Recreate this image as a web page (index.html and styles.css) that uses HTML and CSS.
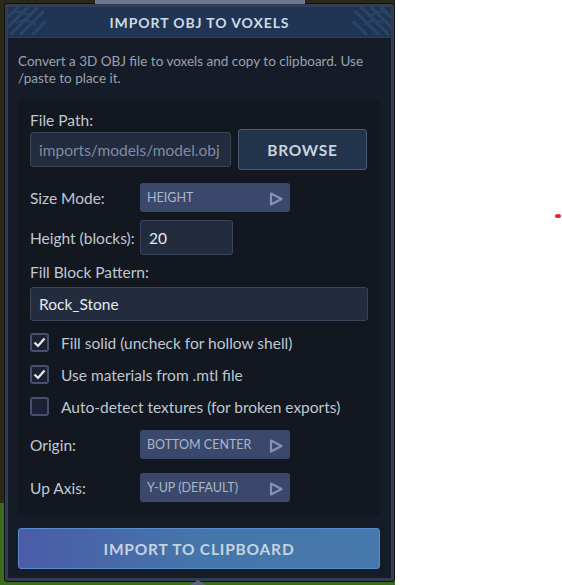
FILE: index.html
```html
<!DOCTYPE html>
<html>
<head>
<meta charset="utf-8">
<link rel="stylesheet" href="styles.css">
</head>
<body>
<div class="stage">
  <div class="top-tab"></div>
  <div class="window">
    <div class="header">
      <svg class="knot knot-left" width="40" height="30" viewBox="0 0 40 30">
        <path d="M0 10 L10 0 M0 20 L20 0 M2 28 L30 0 M12 28 L36 4 M24 28 L38 14" stroke="#294668" stroke-width="3" fill="none"/>
        <path d="M4 6 Q14 2 22 10 M8 16 Q18 10 28 18" stroke="#294668" stroke-width="2" fill="none"/>
      </svg>
      <h1 class="title">IMPORT OBJ TO VOXELS</h1>
      <svg class="knot knot-right" width="40" height="30" viewBox="0 0 40 30">
        <path d="M40 10 L30 0 M40 20 L20 0 M38 28 L10 0 M28 28 L4 4 M16 28 L2 14" stroke="#294668" stroke-width="3" fill="none"/>
        <path d="M36 6 Q26 2 18 10 M32 16 Q22 10 12 18" stroke="#294668" stroke-width="2" fill="none"/>
      </svg>
    </div>
    <div class="content">
      <p class="desc">Convert a 3D OBJ file to voxels and copy to clipboard. Use /paste to place it.</p>
      <div class="section">
        <div class="label">File Path:</div>
        <div class="path-row">
          <div class="input path-input placeholder">imports/models/model.obj</div>
          <button class="browse">BROWSE</button>
        </div>
        <div class="field-row size-row">
          <span class="label">Size Mode:</span>
          <div class="dropdown"><span>HEIGHT</span><svg class="tri" width="14" height="14" viewBox="0 0 14 14"><path d="M2 1.5 L12.5 7 L2 12.5 Z" fill="none" stroke="#8492b4" stroke-width="2.2" stroke-linejoin="round"/></svg></div>
        </div>
        <div class="field-row height-row">
          <span class="label">Height (blocks):</span>
          <div class="input small-input">20</div>
        </div>
        <div class="label fill-label">Fill Block Pattern:</div>
        <div class="input wide-input">Rock_Stone</div>
        <div class="checks">
          <div class="check-row"><span class="box checked"><svg width="13" height="11" viewBox="0 0 13 11"><path d="M1.5 5.5 L5 9 L11.5 1.5" fill="none" stroke="#e8ecf2" stroke-width="2.2"/></svg></span><span class="check-label">Fill solid (uncheck for hollow shell)</span></div>
          <div class="check-row"><span class="box checked"><svg width="13" height="11" viewBox="0 0 13 11"><path d="M1.5 5.5 L5 9 L11.5 1.5" fill="none" stroke="#e8ecf2" stroke-width="2.2"/></svg></span><span class="check-label">Use materials from .mtl file</span></div>
          <div class="check-row"><span class="box"></span><span class="check-label">Auto-detect textures (for broken exports)</span></div>
        </div>
        <div class="field-row origin-row">
          <span class="label">Origin:</span>
          <div class="dropdown"><span>BOTTOM CENTER</span><svg class="tri" width="14" height="14" viewBox="0 0 14 14"><path d="M2 1.5 L12.5 7 L2 12.5 Z" fill="none" stroke="#8492b4" stroke-width="2.2" stroke-linejoin="round"/></svg></div>
        </div>
        <div class="field-row axis-row">
          <span class="label">Up Axis:</span>
          <div class="dropdown"><span>Y-UP (DEFAULT)</span><svg class="tri" width="14" height="14" viewBox="0 0 14 14"><path d="M2 1.5 L12.5 7 L2 12.5 Z" fill="none" stroke="#8492b4" stroke-width="2.2" stroke-linejoin="round"/></svg></div>
        </div>
      </div>
      <button class="import">IMPORT TO CLIPBOARD</button>
    </div>
  </div>
  <div class="bottom-tab"></div>
</div>
<span class="red-dot"></span>
</body>
</html>
```
FILE: styles.css
```css
* { box-sizing: border-box; }
html, body { margin: 0; padding: 0; }
body {
  background: #ffffff;
  width: 562px;
  height: 585px;
  position: relative;
  overflow: hidden;
  font-family: Lato, "Noto Sans", sans-serif;
}
.stage {
  position: relative;
  width: 395px;
  height: 585px;
  padding: 4px 1px 4px 5px;
  background: linear-gradient(#2a2816 0, #2a2816 86%, #3e6a1c 86%, #3e6a1c 100%);
}
.top-tab {
  position: absolute;
  left: 95px;
  top: 0;
  width: 210px;
  height: 4px;
  background: #6c7494;
}
.bottom-tab {
  position: absolute;
  left: 190px;
  bottom: 0;
  width: 16px;
  height: 5px;
  background: #5a6280;
  clip-path: polygon(50% 0, 100% 100%, 0 100%);
}
.window {
  height: 100%;
  display: flex;
  flex-direction: column;
  background: #161c27;
  border: 3px solid #343c54;
  box-shadow: 0 0 0 1px #0e1118;
  border-radius: 2px;
}
.header {
  position: relative;
  height: 31px;
  flex: none;
  background: #1f3553;
  border-bottom: 1px solid #2a3f5c;
  display: flex;
  align-items: center;
  justify-content: center;
}
.knot { position: absolute; top: 0; }
.knot-left { left: 0; }
.knot-right { right: 0; }
.title {
  margin: 0;
  font-size: 14px;
  font-weight: 700;
  letter-spacing: 0.9px;
  color: #cddbe3;
  position: relative;
}
.content {
  flex: 1;
  padding: 15px 11px 0 10px;
  display: flex;
  flex-direction: column;
}
.desc {
  margin: 0 0 13px;
  font-size: 13.5px;
  line-height: 17px;
  color: #98a3b0;
}
.section {
  background: #121720;
  border-radius: 4px;
  padding: 11px 12px 13px 12px;
}
.label {
  font-size: 15.5px;
  color: #c0c9d3;
  line-height: 18px;
}
.path-row {
  display: flex;
  align-items: center;
  gap: 7px;
  margin-top: 0;
}
.input {
  background: #232b3f;
  border: 1.5px solid #3a4558;
  border-radius: 3px;
  font-size: 15.5px;
  color: #e4e9ef;
  display: flex;
  align-items: center;
  padding: 0 8px;
}
.placeholder { color: #7f8ca4; }
.path-input { width: 201px; height: 35px; }
.browse {
  width: 129px;
  height: 41px;
  background: #22334c;
  border: 1.5px solid #4c5c74;
  border-radius: 3px;
  color: #c9d5dd;
  font-family: Lato, "Noto Sans", sans-serif;
  font-weight: 700;
  font-size: 15.5px;
  letter-spacing: 0.8px;
}
.field-row {
  display: flex;
  align-items: center;
}
.field-row .label { width: 110px; flex: none; }
.size-row { margin-top: 13px; }
.height-row { margin-top: 8px; }
.dropdown {
  width: 150px;
  height: 29px;
  background: #3a496b;
  border-radius: 3px;
  display: flex;
  align-items: center;
  justify-content: space-between;
  padding: 0 7px 0 7px;
  font-size: 12.5px;
  color: #aab6ca;
}
.tri { margin-top: 2px; }
.small-input { width: 93px; height: 35px; }
.fill-label { margin-top: 8px; }
.wide-input { height: 34px; margin-top: 6px; width: 338px; }
.checks {
  margin-top: 12px;
  display: flex;
  flex-direction: column;
  gap: 13px;
}
.check-row {
  display: flex;
  align-items: center;
  gap: 12px;
  height: 19px;
}
.box {
  width: 19px;
  height: 19px;
  border: 2px solid #464f6c;
  border-radius: 3px;
  background: #1c2233;
  display: flex;
  align-items: center;
  justify-content: center;
}
.check-label {
  font-size: 15.5px;
  color: #bfc8d2;
}
.origin-row { margin-top: 14px; }
.axis-row { margin-top: 14px; }
.import {
  margin-top: 13px;
  height: 41px;
  width: 362px;
  border: 1.5px solid #5a8dcf;
  border-radius: 3px;
  background: linear-gradient(90deg, #4b5ba8, #4576aa 50%, #4578ab);
  color: #c6d3e0;
  font-family: Lato, "Noto Sans", sans-serif;
  font-weight: 700;
  font-size: 15.5px;
  letter-spacing: 0.8px;
}
.red-dot {
  position: absolute;
  left: 555px;
  top: 214px;
  width: 6px;
  height: 4px;
  border-radius: 50%;
  background: #e8241c;
}
```
